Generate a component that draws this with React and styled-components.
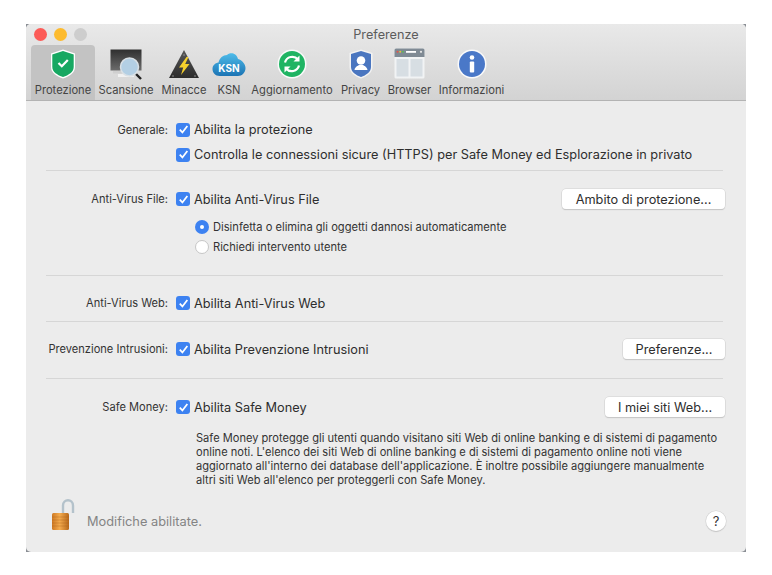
import React from 'react';
import styled, { createGlobalStyle } from 'styled-components';

const GlobalStyle = createGlobalStyle`
  html, body { margin: 0; padding: 0; background: #fff; }
  body { font-family: Inter, "Noto Sans", "Liberation Sans", sans-serif; color: #333; -webkit-font-smoothing: antialiased; }
`;

const Page = styled.div`
  width: 772px;
  height: 575px;
  padding: 24px 0 0 26px;
  box-sizing: border-box;
`;

const Frame = styled.div`
  width: 720px;
  height: 528px;
  background: #8a8e94;
`;

const Window = styled.div`
  width: 100%;
  height: 100%;
  border-radius: 5px;
  overflow: hidden;
  background: #ececec;
  display: flex;
  flex-direction: column;
`;

const Toolbar = styled.header`
  height: 77px;
  box-sizing: border-box;
  background: linear-gradient(#e9e9e9, #d3d3d3);
  border-bottom: 1px solid #b3b3b3;
  display: flex;
  flex-direction: column;
`;

const TitleRow = styled.div`
  height: 21px;
  position: relative;
  display: flex;
  align-items: center;
  justify-content: center;
  font-size: 12.7px;
  color: #5c5c5c;
`;

const Lights = styled.div`
  position: absolute;
  left: 8px;
  top: 4px;
  display: flex;
  gap: 7px;
`;

const Light = styled.span`
  width: 13px;
  height: 13px;
  border-radius: 50%;
  background: ${p => p.$color};
`;

const Tabs = styled.nav`
  display: flex;
  padding-left: 5px;
  flex: 1;
`;

const Tab = styled.div`
  width: ${p => p.$width}px;
  flex: none;
  display: flex;
  flex-direction: column;
  align-items: center;
  border-radius: 4px 4px 0 0;
  background: ${p => (p.$active ? '#c3c3c3' : 'transparent')};
  font-size: 11.2px;
  color: #444;
  white-space: nowrap;
`;

const TabIcon = styled.div`
  height: 37px;
  display: flex;
  align-items: center;
  justify-content: center;
`;

const TabLabel = styled.span`
  line-height: 16px;
`;

const Content = styled.main`
  flex: 1;
  display: flex;
  flex-direction: column;
`;

const Section = styled.section`
  margin: 0 23px 0 20px;
  padding: ${p => p.$pad || '0'};
  border-bottom: ${p => (p.$last ? 'none' : '1px solid #d6d6d6')};
`;

const Row = styled.div`
  display: grid;
  grid-template-columns: 122px 1fr auto;
  column-gap: 8px;
  align-items: center;
  height: ${p => p.$height || 24}px;
`;

const Label = styled.span`
  justify-self: end;
  font-size: 11.1px;
  color: #333;
  white-space: nowrap;
`;

const CheckLine = styled.label`
  display: flex;
  align-items: center;
  gap: 4px;
  font-size: 12.75px;
  color: #2e2e2e;
  white-space: nowrap;
`;

const CheckBox = styled.span`
  width: 14px;
  height: 14px;
  border-radius: 3px;
  background: #3d82f1;
  display: flex;
  align-items: center;
  justify-content: center;
  flex: none;
`;

const Options = styled.div`
  padding: 6px 0 0 149px;
  display: flex;
  flex-direction: column;
`;

const RadioLine = styled.label`
  display: flex;
  align-items: center;
  gap: 4px;
  height: 20px;
  font-size: 11.15px;
  color: #333;
  white-space: nowrap;
`;

const Radio = styled.span`
  width: 14px;
  height: 14px;
  box-sizing: border-box;
  border-radius: 50%;
  flex: none;
  display: flex;
  align-items: center;
  justify-content: center;
  background: ${p => (p.$on ? '#3d82f1' : '#fff')};
  border: ${p => (p.$on ? 'none' : '1px solid #c6c6c6')};
  &::after {
    content: '';
    display: ${p => (p.$on ? 'block' : 'none')};
    width: 4px;
    height: 4px;
    border-radius: 50%;
    background: #fff;
  }
`;

const Button = styled.button`
  height: 20px;
  width: ${p => p.$width}px;
  padding: 0;
  margin-right: -2px;
  border: none;
  border-radius: 4px;
  background: #fff;
  box-shadow: 0 0 0 0.5px #cfcfcf, 0 1px 1px #bcbcbc;
  font: inherit;
  font-size: 12.75px;
  color: #2e2e2e;
`;

const Description = styled.p`
  margin: 0;
  padding: 12px 0 0 150px;
  font-size: 11.1px;
  line-height: 14px;
  color: #333;
  width: 526px;
  box-sizing: content-box;
`;

const Footer = styled.footer`
  margin-top: auto;
  height: 54px;
  display: flex;
  align-items: center;
  padding: 0 20px 8px 24px;
  box-sizing: border-box;
`;

const LockHolder = styled.div`
  width: 26px;
  height: 32px;
  margin-bottom: 12px;
  flex: none;
`;

const LockText = styled.span`
  margin-left: 11px;
  font-size: 12.8px;
  color: #848484;
`;

const HelpButton = styled.button`
  margin-left: auto;
  width: 20px;
  height: 20px;
  padding: 0;
  border: none;
  border-radius: 50%;
  background: #fff;
  box-shadow: 0 0 0 0.5px #d0d0d0, 0 1px 1px #bbb;
  font: inherit;
  font-size: 13px;
  color: #333;
`;

const Tick = () => (
  <svg width="11" height="11" viewBox="0 0 10 10">
    <path d="M1.6 5.2 4 7.7 8.5 1.8" fill="none" stroke="#fff" strokeWidth="1.6" />
  </svg>
);

const Check = ({ children }) => (
  <CheckLine>
    <CheckBox><Tick /></CheckBox>
    {children}
  </CheckLine>
);

const ShieldIcon = () => (
  <svg width="26" height="30" viewBox="0 0 26 30">
    <path d="M13 0.5 25 4.5V18C25 24 19 27.5 13 29.5 7 27.5 1 24 1 18V4.5Z" fill="#fff" />
    <path d="M13 2 23.7 5.5V18C23.7 23 18.5 26.2 13 28 7.5 26.2 2.3 23 2.3 18V5.5Z" fill="#17a862" />
    <path d="M8.5 14 11.8 17.3 17.8 11" fill="none" stroke="#fff" strokeWidth="2.2" />
  </svg>
);

const ScanIcon = () => (
  <svg width="34" height="32" viewBox="0 0 34 32">
    <defs>
      <linearGradient id="scanScreen" x1="0" y1="0" x2="0" y2="1">
        <stop offset="0" stopColor="#2f2f2f" />
        <stop offset="1" stopColor="#6c6c6c" />
      </linearGradient>
    </defs>
    <rect x="1.5" y="1.5" width="31" height="21" fill="url(#scanScreen)" />
    <rect x="4" y="23" width="22" height="2.5" fill="#cfcfcf" />
    <rect x="9" y="26" width="16" height="3" fill="#f1f1f1" />
    <path d="M26 25 32 31" stroke="#222" strokeWidth="2.4" />
    <circle cx="20.5" cy="19" r="9" fill="#b3cfe4" stroke="#d9e0e5" strokeWidth="1.5" />
  </svg>
);

const ThreatIcon = () => (
  <svg width="32" height="30" viewBox="0 0 32 30">
    <defs>
      <linearGradient id="threatFill" x1="0" y1="0" x2="0" y2="1">
        <stop offset="0" stopColor="#585858" />
        <stop offset="1" stopColor="#2c2c2c" />
      </linearGradient>
    </defs>
    <path d="M16 1 31 29H1Z" fill="url(#threatFill)" />
    <path d="M18.5 8 11 18.5H15.2L13 26 21.5 15H17.2L20.5 8Z" fill="#f6d02c" />
    <circle cx="16" cy="6" r="0.8" fill="#999" />
    <circle cx="5" cy="27" r="0.8" fill="#999" />
    <circle cx="27" cy="27" r="0.8" fill="#999" />
  </svg>
);

const KsnIcon = () => (
  <svg width="34" height="26" viewBox="0 0 34 26">
    <defs>
      <linearGradient id="ksnCloud" x1="0" y1="0" x2="0" y2="1">
        <stop offset="0" stopColor="#4dbbe9" />
        <stop offset="1" stopColor="#1c74b4" />
      </linearGradient>
    </defs>
    <path d="M8 25C3 25 .5 21.5 .5 18 .5 14.5 3 12 6.5 11.5 7.5 7 11 4 15 4 17.5 1.5 24 1 26 8 30 9 33.5 13 33.5 17 33.5 21.5 30 25 26 25Z" fill="url(#ksnCloud)" />
    <text x="17" y="21" textAnchor="middle" fontFamily="Inter, sans-serif" fontWeight="700" fontSize="10" fill="#fff">KSN</text>
  </svg>
);

const UpdateIcon = () => (
  <svg width="30" height="30" viewBox="0 0 30 30">
    <circle cx="15" cy="15" r="14.5" fill="#fafafa" />
    <circle cx="15" cy="15" r="13" fill="#1fb463" />
    <path d="M8 13.5A7.5 7.5 0 0 1 21 10.5" fill="none" stroke="#fff" strokeWidth="2.2" />
    <path d="M22.5 6.5V12.5H16.5Z" fill="#fff" />
    <path d="M22 16.5A7.5 7.5 0 0 1 9 19.5" fill="none" stroke="#fff" strokeWidth="2.2" />
    <path d="M7.5 23.5V17.5H13.5Z" fill="#fff" />
  </svg>
);

const PrivacyIcon = () => (
  <svg width="24" height="30" viewBox="0 0 24 30">
    <path d="M12 .5 23.5 4V18C23.5 24 17.5 27.5 12 29.5 6.5 27.5 .5 24 .5 18V4Z" fill="#f3f3f3" />
    <path d="M12 2 22 5V18C22 23 17 26.2 12 28 7 26.2 2 23 2 18V5Z" fill="#4a76c0" />
    <circle cx="12" cy="11.5" r="4.3" fill="#fff" />
    <path d="M5.5 21C6 17.5 9 17 10 16H14C15 17 18 17.5 18.5 21Z" fill="#fff" />
  </svg>
);

const BrowserIcon = () => (
  <svg width="31" height="31" viewBox="0 0 31 31">
    <rect x=".5" y=".5" width="30" height="30" rx="1.5" fill="#f1f3f4" />
    <path d="M.5 2A1.5 1.5 0 0 1 2 .5H29A1.5 1.5 0 0 1 30.5 2V9H.5Z" fill="#7f8a94" />
    <circle cx="3.5" cy="3.8" r="1" fill="#e5534b" />
    <circle cx="6.2" cy="3.8" r="1" fill="#e9c23b" />
    <circle cx="8.9" cy="3.8" r="1" fill="#5cb85c" />
    <rect x="12" y="3" width="10" height="1.8" fill="#fff" />
    <circle cx="27" cy="3.8" r="1.1" fill="#e8e8e8" />
    <rect x="2.5" y="11" width="12" height="17.5" fill="#d7dee3" />
    <rect x="16.5" y="11" width="12" height="17.5" fill="#d7dee3" />
  </svg>
);

const InfoIcon = () => (
  <svg width="30" height="30" viewBox="0 0 30 30">
    <circle cx="15" cy="15" r="14.5" fill="#fafafa" />
    <circle cx="15" cy="15" r="13" fill="#4a78c8" />
    <circle cx="15" cy="8.5" r="2.3" fill="#fff" />
    <rect x="12.8" y="12.5" width="4.4" height="11" rx="1" fill="#fff" />
  </svg>
);

const LockIcon = () => (
  <svg width="26" height="32" viewBox="0 0 26 32">
    <defs>
      <linearGradient id="lockBody" x1="0" y1="0" x2="1" y2="0">
        <stop offset="0" stopColor="#cf7a24" />
        <stop offset="0.45" stopColor="#f4ab4e" />
        <stop offset="1" stopColor="#b8691a" />
      </linearGradient>
    </defs>
    <path d="M13 15V6.5C13 3 15.5 1.2 18 1.2 20.5 1.2 23 3 23 6.5V14" fill="none" stroke="#b4c2cb" strokeWidth="2.4" />
    <rect x="2" y="14" width="17" height="17" rx="1.5" fill="url(#lockBody)" />
    <path d="M2 18H19M2 21H19M2 24H19M2 27H19" stroke="#a85f1c" strokeWidth=".6" opacity=".6" />
  </svg>
);

const tabs = [
  { label: 'Protezione', width: 64, icon: <ShieldIcon />, active: true },
  { label: 'Scansione', width: 62, icon: <ScanIcon /> },
  { label: 'Minacce', width: 54, icon: <ThreatIcon /> },
  { label: 'KSN', width: 36, icon: <KsnIcon /> },
  { label: 'Aggiornamento', width: 90, icon: <UpdateIcon /> },
  { label: 'Privacy', width: 47, icon: <PrivacyIcon /> },
  { label: 'Browser', width: 51, icon: <BrowserIcon /> },
  { label: 'Informazioni', width: 73, icon: <InfoIcon /> },
];

export default function App() {
  return (
    <Page>
      <GlobalStyle />
      <Frame>
        <Window>
          <Toolbar>
            <TitleRow>
              <Lights>
                <Light $color="#fc5b57" />
                <Light $color="#fdbb2e" />
                <Light $color="#cdcdcd" />
              </Lights>
              Preferenze
            </TitleRow>
            <Tabs>
              {tabs.map(t => (
                <Tab key={t.label} $width={t.width} $active={t.active}>
                  <TabIcon>{t.icon}</TabIcon>
                  <TabLabel>{t.label}</TabLabel>
                </Tab>
              ))}
            </Tabs>
          </Toolbar>
          <Content>
            <Section $pad="16px 0 3px">
              <Row $height={25}>
                <Label>Generale:</Label>
                <Check>Abilita la protezione</Check>
              </Row>
              <Row $height={25}>
                <span />
                <Check>Controlla le connessioni sicure (HTTPS) per Safe Money ed Esplorazione in privato</Check>
              </Row>
            </Section>
            <Section $pad="16px 0 18px">
              <Row>
                <Label>Anti-Virus File:</Label>
                <Check>Abilita Anti-Virus File</Check>
                <Button $width={163}>Ambito di protezione...</Button>
              </Row>
              <Options>
                <RadioLine><Radio $on />Disinfetta o elimina gli oggetti dannosi automaticamente</RadioLine>
                <RadioLine><Radio />Richiedi intervento utente</RadioLine>
              </Options>
            </Section>
            <Section $pad="15px 0 6px">
              <Row>
                <Label>Anti-Virus Web:</Label>
                <Check>Abilita Anti-Virus Web</Check>
              </Row>
            </Section>
            <Section $pad="15px 0 17px">
              <Row>
                <Label>Prevenzione Intrusioni:</Label>
                <Check>Abilita Prevenzione Intrusioni</Check>
                <Button $width={102}>Preferenze...</Button>
              </Row>
            </Section>
            <Section $pad="16px 0 0" $last>
              <Row>
                <Label>Safe Money:</Label>
                <Check>Abilita Safe Money</Check>
                <Button $width={120}>I miei siti Web...</Button>
              </Row>
              <Description>
                Safe Money protegge gli utenti quando visitano siti Web di online banking e di sistemi di pagamento online noti. L'elenco dei siti Web di online banking e di sistemi di pagamento online noti viene aggiornato all'interno dei database dell'applicazione. È inoltre possibile aggiungere manualmente altri siti Web all'elenco per proteggerli con Safe Money.
              </Description>
            </Section>
            <Footer>
              <LockHolder><LockIcon /></LockHolder>
              <LockText>Modifiche abilitate.</LockText>
              <HelpButton>?</HelpButton>
            </Footer>
          </Content>
        </Window>
      </Frame>
    </Page>
  );
}
